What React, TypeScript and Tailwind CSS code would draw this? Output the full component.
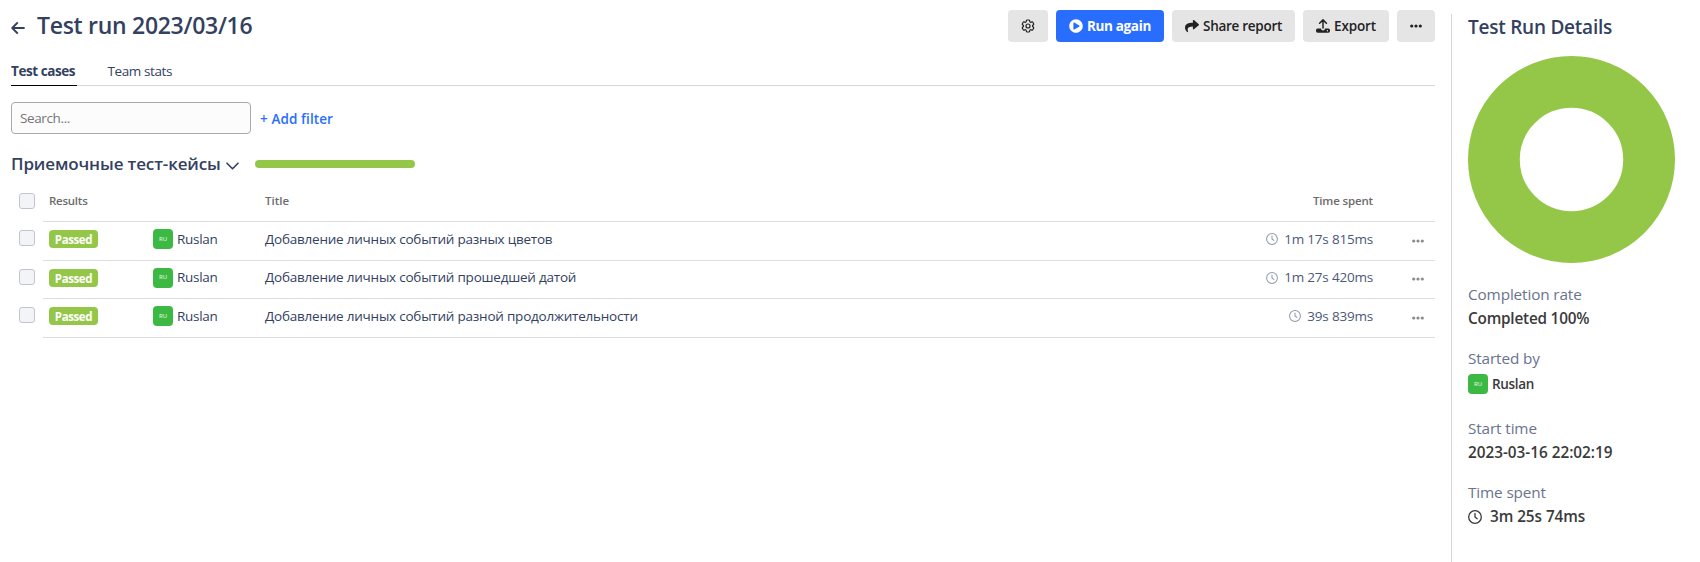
import type { ReactNode } from "react";
import { FaShare, FaPlayCircle } from "react-icons/fa";
import { HiOutlineCog6Tooth } from "react-icons/hi2";

function ArrowLeft() {
  return (
    <svg width="14" height="14" viewBox="0 0 14 14" fill="none" stroke="currentColor" strokeWidth="1.8" strokeLinecap="round" strokeLinejoin="round">
      <path d="M13 7H1.2M6.2 2 1.2 7l5 5" />
    </svg>
  );
}

function Upload() {
  return (
    <svg width="14" height="14" viewBox="0 0 14 14">
      <path d="M7 9V1M3.6 4.2 7 .9l3.4 3.3" fill="none" stroke="currentColor" strokeWidth="1.5" strokeLinecap="round" strokeLinejoin="round" />
      <path fillRule="evenodd" fill="currentColor" d="M1.6 9.6H5a2 2 0 0 0 4 0h3.4A1.6 1.6 0 0 1 14 11.2v.9a1.7 1.7 0 0 1-1.7 1.7H1.7A1.7 1.7 0 0 1 0 12.1v-.9a1.6 1.6 0 0 1 1.6-1.6ZM11.4 11a.7.7 0 1 0 0 1.4.7.7 0 0 0 0-1.4Z" />
    </svg>
  );
}

function Clock({ size, width }: { size: number; width: number }) {
  return (
    <svg width={size} height={size} viewBox="0 0 14 14" fill="none" stroke="currentColor" strokeWidth={width} strokeLinecap="round" strokeLinejoin="round">
      <circle cx="7" cy="7" r="6.3" />
      <path d="M7 3.4V7l2.2 1.7" />
    </svg>
  );
}

function Dots() {
  return (
    <svg width="12" height="4" viewBox="0 0 12 4" fill="currentColor">
      <circle cx="1.7" cy="2" r="1.6" />
      <circle cx="6" cy="2" r="1.6" />
      <circle cx="10.3" cy="2" r="1.6" />
    </svg>
  );
}

function Avatar() {
  return (
    <span className="flex h-5 w-5 shrink-0 items-center justify-center rounded bg-[#3cb943] text-[6px] font-normal tracking-normal text-white/90">
      RU
    </span>
  );
}

function Checkbox() {
  return <span className="block h-4 w-4 rounded-[3px] border border-[#c1c4d0] bg-[#f3f4f7]" />;
}

function Button({ className, children }: { className: string; children: ReactNode }) {
  return (
    <button className={`flex h-8 items-center justify-center rounded text-[13.5px] whitespace-nowrap ${className}`}>
      {children}
    </button>
  );
}

const rows = [
  { title: "Добавление личных событий разных цветов", time: "1m 17s 815ms", height: "h-[39px]" },
  { title: "Добавление личных событий прошедшей датой", time: "1m 27s 420ms", height: "h-[38px]" },
  { title: "Добавление личных событий разной продолжительности", time: "39s 839ms", height: "h-[39px]" },
];

function Row({ title, time, height }: (typeof rows)[number]) {
  return (
    <div className={`flex ${height}`}>
      <div className="w-8 pt-2 pl-2">
        <Checkbox />
      </div>
      <div className="flex flex-1 items-center border-b border-[#dcdee3] pb-1 pl-[6px] text-[13.5px] text-[#33415f]">
        <div className="w-[104px]">
          <span className="flex h-[18px] w-[49px] items-center justify-center rounded bg-[#94c748] pt-[2px] text-[11.5px] font-bold tracking-[-0.4px] text-white">
            Passed
          </span>
        </div>
        <div className="flex w-28 items-center gap-1">
          <Avatar />
          <span className="tracking-[-0.3px]">Ruslan</span>
        </div>
        <div className="flex-1 tracking-[-0.22px]">{title}</div>
        <div className="flex items-center gap-[6px] text-[#4b587a]">
          <span className="text-[#8f99ad]">
            <Clock size={12} width={1.2} />
          </span>
          <span className="tracking-[-0.2px]">{time}</span>
        </div>
        <div className="flex w-[62px] justify-end pt-[3px] pr-[11px] text-[#8b8b8b]">
          <Dots />
        </div>
      </div>
    </div>
  );
}

function Label({ children }: { children: ReactNode }) {
  return <dt className="h-6 text-[15.3px] leading-6 font-normal tracking-[-0.12px] text-[#68738e]">{children}</dt>;
}

export default function App() {
  return (
    <div className="flex h-[562px] w-[1700px] overflow-hidden bg-white font-['Open_Sans','Noto_Sans',sans-serif]">
      <main className="w-[1451px] pr-4 pl-[11px]">
        <header className="flex h-[52px] items-center justify-between">
          <div className="flex items-center gap-3 text-[#33415f]">
            <span className="pt-1">
              <ArrowLeft />
            </span>
            <h1 className="pb-[2px] text-[23px] leading-8 font-semibold tracking-[-0.29px]">Test run 2023/03/16</h1>
          </div>
          <div className="flex gap-2 text-[#222]">
            <Button className="w-10 bg-[#e5e5e5]">
              <HiOutlineCog6Tooth size={16} strokeWidth={1.8} />
            </Button>
            <Button className="w-[108px] gap-1 bg-[#296dff] font-bold tracking-[-0.34px] text-white">
              <FaPlayCircle size={14} />
              <span>Run again</span>
            </Button>
            <Button className="w-[123px] gap-1 bg-[#e5e5e5] font-semibold tracking-[-0.28px]">
              <FaShare size={14} />
              <span>Share report</span>
            </Button>
            <Button className="w-[86px] gap-1 bg-[#e5e5e5] font-semibold tracking-[-0.13px]">
              <Upload />
              <span>Export</span>
            </Button>
            <Button className="w-[38px] bg-[#e5e5e5]">
              <Dots />
            </Button>
          </div>
        </header>

        <nav className="flex h-[34px] gap-[30.5px] border-b border-[#d6d6d6] pt-2 text-[13.5px] leading-[22px] text-[#33415f]">
          <span className="-mb-px w-[66px] border-b border-black font-bold tracking-[-0.44px]">Test cases</span>
          <span className="tracking-[-0.4px]">Team stats</span>
        </nav>

        <div className="mt-4 flex h-8 items-center gap-[9px] text-[13.5px]">
          <input
            className="h-8 w-60 rounded border border-[#a9a9a9] bg-[#fcfcfc] px-2 tracking-[-0.38px] outline-none placeholder:text-[#757575]"
            placeholder="Search..."
          />
          <span className="pt-[3px] font-semibold tracking-[0.1px] text-[#296dff]">+ Add filter</span>
        </div>

        <div className="mt-4 flex h-7 items-center">
          <h2 className="w-[215px] text-[17px] leading-6 font-semibold tracking-[-0.12px] whitespace-nowrap text-[#33415f]">Приемочные тест-кейсы</h2>
          <svg className="mt-[3px]" width="13" height="8" viewBox="0 0 13 8" fill="none" stroke="#33415f" strokeWidth="1.6" strokeLinecap="round" strokeLinejoin="round">
            <path d="M1 1.2 6.5 6.8 12 1.2" />
          </svg>
          <div className="ml-4 h-2 w-40 rounded-full bg-[#94c748]" />
        </div>

        <section className="mt-2">
          <div className="flex h-9">
            <div className="w-8 pt-[7px] pl-2">
              <Checkbox />
            </div>
            <div className="flex flex-1 border-b border-[#dcdee3] pt-[5px] pl-[6px] text-[11.5px] leading-5 font-semibold text-[#6b6b6b]">
              <span className="w-[216px] tracking-[-0.25px]">Results</span>
              <span className="flex-1">Title</span>
              <span className="pr-[62px] tracking-[-0.15px]">Time spent</span>
            </div>
          </div>
          {rows.map((row) => (
            <Row key={row.title} {...row} />
          ))}
        </section>
      </main>

      <aside className="mt-[14px] flex-1 border-l border-[#d6d6d6] pl-4">
        <h2 className="h-[42px] text-[19px] leading-[26px] font-semibold tracking-[-0.24px] text-[#33415f]">Test Run Details</h2>
        <svg width="207" height="207" viewBox="0 0 207 207">
          <circle cx="103.5" cy="103.5" r="77.6" fill="none" stroke="#94c748" strokeWidth="51.8" />
        </svg>
        <dl className="pt-[19px] text-[15.3px] leading-6 font-semibold text-[#3a3a3a]">
          <Label>Completion rate</Label>
          <dd className="mb-4 h-6 tracking-[-0.2px]">Completed 100%</dd>
          <Label>Started by</Label>
          <dd className="mb-[18px] flex h-7 items-center gap-1 text-[13.5px] tracking-[-0.3px]">
            <Avatar />
            <span>Ruslan</span>
          </dd>
          <Label>Start time</Label>
          <dd className="mb-4 h-6 tracking-[-0.01px]">2023-03-16 22:02:19</dd>
          <Label>Time spent</Label>
          <dd className="flex h-6 items-center gap-2 tracking-[-0.05px]">
            <span className="pt-[2px]">
              <Clock size={14} width={1.3} />
            </span>
            <span>3m 25s 74ms</span>
          </dd>
        </dl>
      </aside>
    </div>
  );
}
